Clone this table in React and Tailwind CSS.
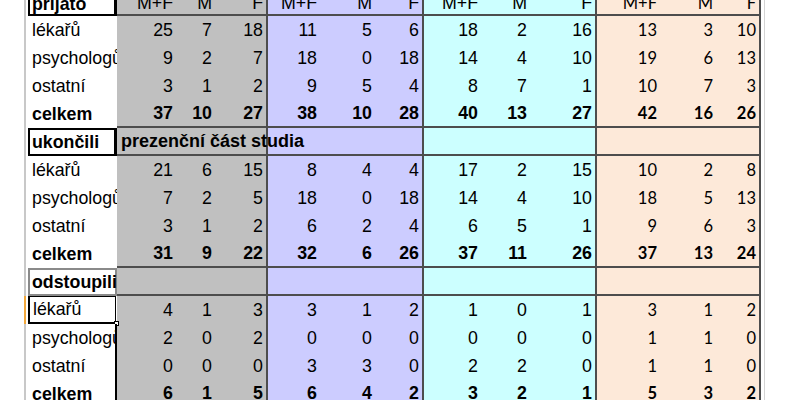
const arial = "font-['Liberation_Sans',Arial,sans-serif]";

const bands = [
  { bg: 'bg-[#c0c0c0]', font: arial, size: 'text-[17.8px]', widths: ['w-[59px]', 'w-[39px]', 'w-[53px]'] },
  { bg: 'bg-[#ccccff]', font: arial, size: 'text-[17.8px]', widths: ['w-[52px]', 'w-[55px]', 'w-[49px]'] },
  { bg: 'bg-[#ccffff]', font: arial, size: 'text-[17.8px]', widths: ['w-[57px]', 'w-[49px]', 'w-[67px]'] },
  { bg: 'bg-[#fde9d9]', font: "font-['Lato',sans-serif]", size: 'text-[16.5px]', widths: ['w-[63px]', 'w-[56px]', 'w-[45px]'] },
]

const bandWidths = ['w-[151px]', 'w-[156px]', 'w-[173px]', 'w-[164px]']

const sections = [
  {
    title: 'prijato',
    box: 'black',
    rows: [
      ['lékařů', [25, 7, 18, 11, 5, 6, 18, 2, 16, 13, 3, 10]],
      ['psychologů', [9, 2, 7, 18, 0, 18, 14, 4, 10, 19, 6, 13]],
      ['ostatní', [3, 1, 2, 9, 5, 4, 8, 7, 1, 10, 7, 3]],
      ['celkem', [37, 10, 27, 38, 10, 28, 40, 13, 27, 42, 16, 26]],
    ],
  },
  {
    title: 'ukončili',
    box: 'black',
    note: 'prezenční část studia',
    rows: [
      ['lékařů', [21, 6, 15, 8, 4, 4, 17, 2, 15, 10, 2, 8]],
      ['psychologů', [7, 2, 5, 18, 0, 18, 14, 4, 10, 18, 5, 13]],
      ['ostatní', [3, 1, 2, 6, 2, 4, 6, 5, 1, 9, 6, 3]],
      ['celkem', [31, 9, 22, 32, 6, 26, 37, 11, 26, 37, 13, 24]],
    ],
  },
  {
    title: 'odstoupili',
    box: 'gray',
    selected: true,
    rows: [
      ['lékařů', [4, 1, 3, 3, 1, 2, 1, 0, 1, 3, 1, 2]],
      ['psychologů', [2, 0, 2, 0, 0, 0, 0, 0, 0, 1, 1, 0]],
      ['ostatní', [0, 0, 0, 3, 3, 0, 2, 2, 0, 1, 1, 0]],
      ['celkem', [6, 1, 5, 6, 4, 2, 3, 2, 1, 5, 3, 2]],
    ],
  },
]

function Gutter({ orange }) {
  return (
    <>
      <div className="w-[24px] shrink-0 bg-white" />
      <div className={`w-[2px] shrink-0 ${orange ? 'bg-[#f2a83c]' : 'bg-[#c8c8c8]'}`} />
    </>
  )
}

// buňky jednoho pásma (3 sloupce)
function BandCells({ values, bold, line, header }) {
  return bands.map((b, bi) =>
    b.widths.map((w, ci) => (
      <div
        key={`${bi}-${ci}`}
        className={`${w} shrink-0 h-full flex items-center justify-end pr-[3px] ${header ? 'pt-[5px]' : ''} ${b.bg} ${b.font} ${b.size} ${bold ? 'font-bold' : ''} ${ci === 2 ? 'border-r-2 border-r-[#4d4d4d]' : ''} ${line ? 'border-b-2 border-b-[#4d4d4d]' : ''}`}
      >
        {values ? values[bi * 3 + ci] : ''}
      </div>
    ))
  )
}

function TitleRow({ section, header }) {
  const boxBorder = section.box === 'black' ? 'border-2 border-black border-r-[3px]' : 'border-2 border-[#8a8a8a]'
  return (
    <div className="flex h-[28px]">
      <Gutter />
      <div className={`w-[91px] shrink-0 h-full bg-white pl-[2px] ${arial}`}>
        <div className={`h-full flex items-center pl-[2px] text-[17.8px] font-bold ${header ? 'pt-[5px]' : ''} ${boxBorder}`}>{section.title}</div>
      </div>
      {header ? (
        <BandCells values={['M+F', 'M', 'F', 'M+F', 'M', 'F', 'M+F', 'M', 'F', 'M+F', 'M', 'F']} line header />
      ) : (
        bands.map((b, bi) => (
          <div
            key={bi}
            className={`${bandWidths[bi]} shrink-0 h-full flex items-center ${b.bg} border-r-2 border-r-[#4d4d4d] border-b-2 border-b-[#4d4d4d]`}
          >
            {bi === 0 && section.note && (
              <span className={`relative z-10 whitespace-nowrap pl-[4px] text-[18px] font-bold ${arial}`}>{section.note}</span>
            )}
          </div>
        ))
      )}
      <div className="w-[3px] shrink-0" />
      <div className="w-[1px] shrink-0 bg-[#d4d4d4]" />
    </div>
  )
}

function DataRow({ label, values, bold, line, selected, edge }) {
  return (
    <div className="flex h-[28px]">
      <Gutter orange={selected} />
      <div className={`w-[91px] shrink-0 h-full bg-white relative ${arial} text-[17.8px] ${bold ? 'font-bold' : ''}`}>
        {selected ? (
          <div className="absolute left-[2px] top-0 right-[1px] bottom-[-1px] border-l-2 border-t border-r border-b-[3px] border-black flex items-center pl-[3px]">
            {label}
            <div className="absolute right-[-4px] bottom-[-4px] w-[5px] h-[5px] bg-white border border-black" />
          </div>
        ) : (
          <div className={`h-full flex items-center pl-[6px] overflow-hidden whitespace-nowrap ${edge ? 'border-r-2 border-r-black' : ''}`}>
            {label}
          </div>
        )}
      </div>
      <BandCells values={values} bold={bold} line={line} />
      <div className="w-[3px] shrink-0" />
      <div className="w-[1px] shrink-0 bg-[#d4d4d4]" />
    </div>
  )
}

export default function App() {
  return (
    <div className="w-[790px] h-[400px] overflow-hidden bg-white text-black">
      <div className="-mt-[12px]">
        {sections.map((s, si) => (
          <div key={s.title}>
            <TitleRow section={s} header={si === 0} />
            {s.rows.map(([label, values], ri) => (
              <DataRow
                key={label}
                label={label}
                values={values}
                bold={ri === 3}
                line={ri === 3}
                selected={s.selected && ri === 0}
                edge={s.selected && ri > 0}
              />
            ))}
          </div>
        ))}
      </div>
    </div>
  )
}
